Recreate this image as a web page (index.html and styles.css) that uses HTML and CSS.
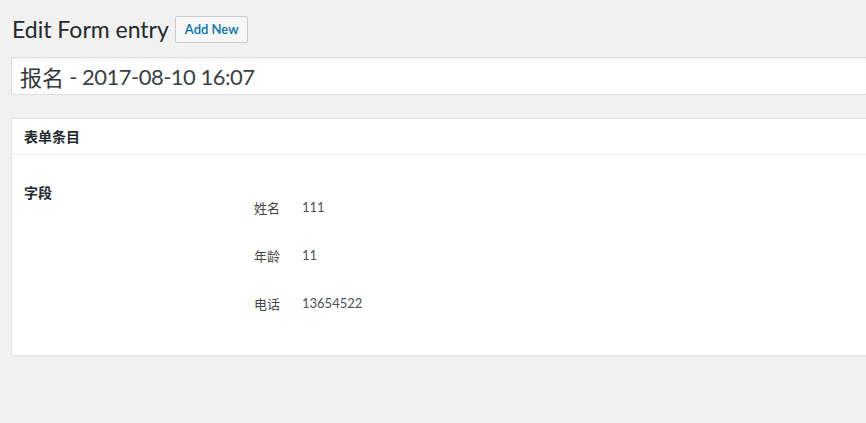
FILE: index.html
```html
<!DOCTYPE html>
<html lang="zh-CN">
<head>
<meta charset="utf-8">
<title>Edit Form entry</title>
<link rel="stylesheet" href="styles.css">
</head>
<body>
<div class="wrap">
  <div class="page-head">
    <h1 class="page-title">Edit Form entry</h1>
    <a class="page-title-action" href="#">Add New</a>
  </div>
  <div class="title-field">报名<span class="title-date"> - 2017-08-10 16:07</span></div>
  <div class="postbox">
    <h2 class="postbox-title">表单条目</h2>
    <div class="postbox-body">
      <div class="field-label">字段</div>
      <div class="field-list">
        <div class="field-row"><span class="field-name">姓名</span><span class="field-value">111</span></div>
        <div class="field-row"><span class="field-name">年龄</span><span class="field-value">11</span></div>
        <div class="field-row"><span class="field-name">电话</span><span class="field-value">13654522</span></div>
      </div>
    </div>
  </div>
</div>
</body>
</html>
```
FILE: styles.css
```css
html, body {
  margin: 0;
  padding: 0;
}
body {
  background: #f1f1f1;
  color: #444;
  font-family: "Segoe UI", "Lato", "Noto Sans CJK SC", sans-serif;
  font-size: 13px;
  overflow: hidden;
  width: 866px;
  height: 423px;
}
.wrap {
  padding-left: 11px;
}
.page-head {
  display: flex;
  align-items: center;
  margin-top: 16px;
  height: 26px;
}
.page-title {
  margin: 0 0 0 1px;
  font-size: 23px;
  font-weight: 400;
  line-height: 30px;
  color: #23282d;
}
.page-title-action {
  margin-left: 6px;
  box-sizing: border-box;
  height: 27px;
  padding: 0 9px;
  display: flex;
  align-items: center;
  border: 1px solid #ccc;
  border-radius: 2px;
  background: #f7f7f7;
  color: #0073aa;
  font-size: 13px;
  font-weight: 600;
  text-decoration: none;
}
.title-field {
  margin-top: 15px;
  box-sizing: border-box;
  height: 38px;
  border: 1px solid #ddd;
  border-right: none;
  background: #fff;
  box-shadow: inset 0 1px 2px rgba(0,0,0,.07);
  padding: 0 8px;
  display: flex;
  align-items: center;
  white-space: pre;
  font-size: 22px;
  color: #32373c;
}
.title-date {
  letter-spacing: -0.5px;
  color: #3a3f44;
}
.postbox {
  margin-top: 23px;
  background: #fff;
  border: 1px solid #e5e5e5;
  border-right: none;
  box-shadow: 0 1px 1px rgba(0,0,0,.04);
}
.postbox-title {
  margin: 0;
  padding: 0 12px;
  height: 35px;
  line-height: 35px;
  border-bottom: 1px solid #eee;
  font-size: 14px;
  font-weight: 600;
  color: #23282d;
}
.postbox-body {
  display: flex;
  padding: 29px 12px 28px;
}
.field-label {
  width: 230px;
  line-height: 18px;
  font-size: 14px;
  font-weight: 600;
  color: #23282d;
}
.field-list {
  display: flex;
  flex-direction: column;
  margin-top: -1px;
}
.field-row {
  display: flex;
  align-items: center;
  height: 48px;
}
.field-name {
  width: 48px;
  color: #444;
}
.field-value {
  color: #4a5058;
}
```
